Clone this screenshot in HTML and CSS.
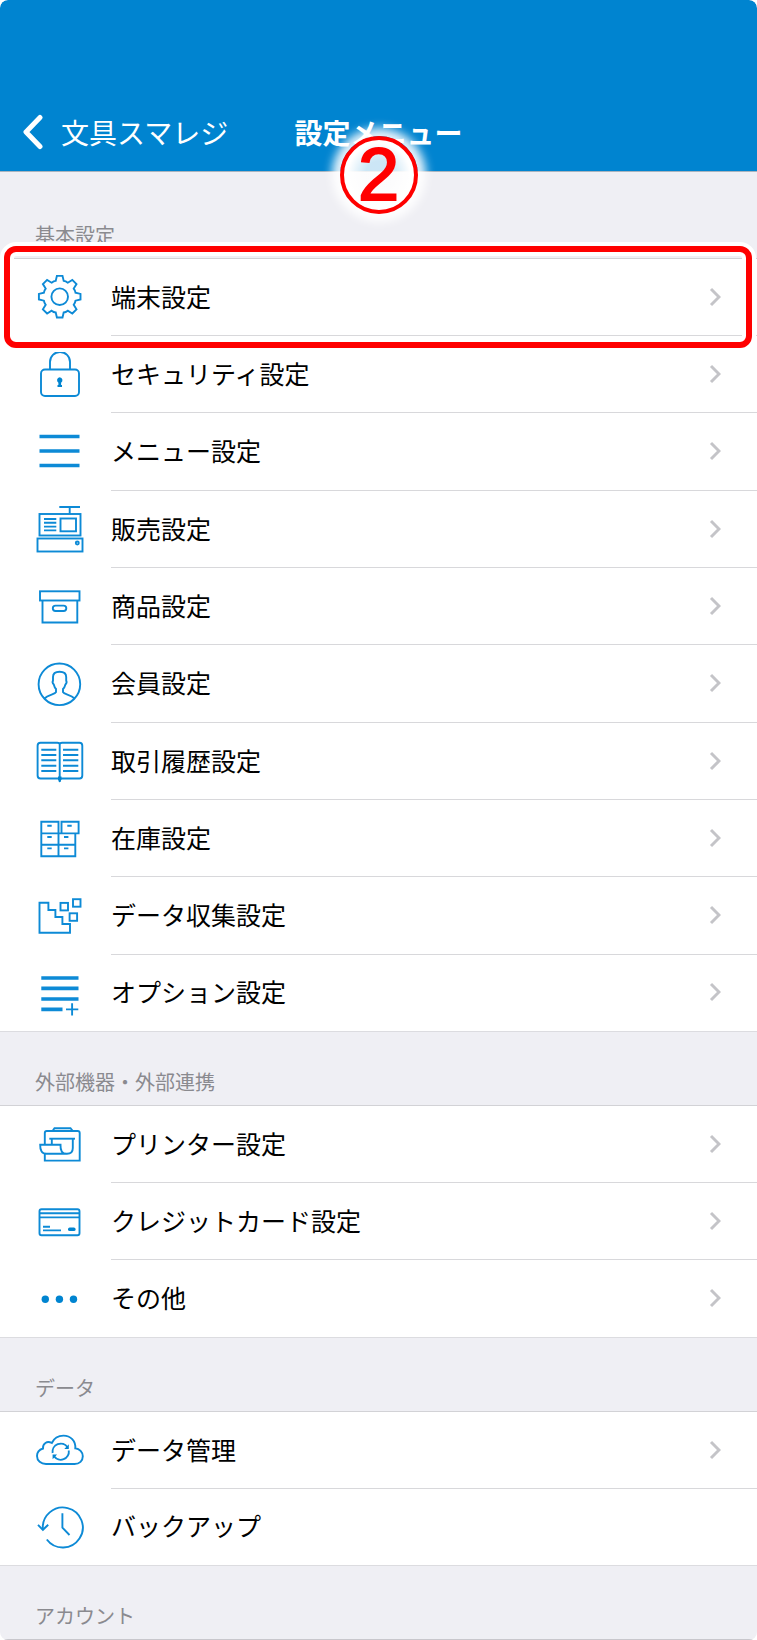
FILE: index.html
```
<!DOCTYPE html>
<html lang="ja">
<head>
<meta charset="utf-8">
<meta name="viewport" content="width=device-width, initial-scale=1">
<title>設定メニュー</title>
<link rel="stylesheet" href="styles.css">
</head>
<body>
<header class="navbar">
  <button class="back" type="button">
    <svg class="back-icon" viewBox="0 0 22 36" aria-hidden="true"><path d="M18 3.500L4 18L18 32.500"/></svg>
    <span>文具スマレジ</span>
  </button>
  <h1 class="title">設定メニュー</h1>
  <span class="step">2</span>
</header>
<main>
  <h2 class="heading heading-first">基本設定</h2>
  <ul class="list">
    <li class="row">
      <a class="link" href="#">
        <svg class="icon" viewBox="0 0 50 50" aria-hidden="true"><g transform="translate(25.700 24.700)"><path d="M-2.800-20.800H2.800L4-15.800Q6-15.600 8.100-14L12.600-16.800L16.800-12.600L14-8.100Q15.600-6 15.800-4L20.800-2.800V2.800L15.800 4Q15.600 6 14 8.100L16.800 12.600L12.600 16.800L8.100 14Q6 15.600 4 15.800L2.800 20.800H-2.800L-4 15.800Q-6 15.600-8.100 14L-12.600 16.800L-16.800 12.600L-14 8.100Q-15.600 6-15.800 4L-20.800 2.800V-2.800L-15.800-4Q-15.600-6-14-8.100L-16.800-12.600L-12.600-16.800L-8.100-14Q-6-15.600-4-15.800Z"/><circle r="8.300"/></g></svg>
        <span class="label">端末設定</span>
        <svg class="chevron" viewBox="0 0 12 20" aria-hidden="true"><path d="M2 2L10 10L2 18"/></svg>
      </a>
      <span class="highlight"></span>
    </li>
    <li class="row">
      <a class="link" href="#">
        <svg class="icon" viewBox="0 0 50 50" aria-hidden="true"><rect x="7" y="20.500" width="38" height="26.500" rx="4"/><path d="M16 20.500V13a10 10 0 0 1 20 0V20.500"/><path class="solid" d="M25.700 28.200a3 3 0 0 1 1.400 5.500V36H28v2H23.500V36h.9V33.700a3 3 0 0 1 1.300-5.500Z"/></svg>
        <span class="label">セキュリティ設定</span>
        <svg class="chevron" viewBox="0 0 12 20" aria-hidden="true"><path d="M2 2L10 10L2 18"/></svg>
      </a>
    </li>
    <li class="row">
      <a class="link" href="#">
        <svg class="icon" viewBox="0 0 50 50" aria-hidden="true"><path class="thick" d="M5.500 10.500H45.500M5.500 25H45.500M5.500 39.500H45.500"/></svg>
        <span class="label">メニュー設定</span>
        <svg class="chevron" viewBox="0 0 12 20" aria-hidden="true"><path d="M2 2L10 10L2 18"/></svg>
      </a>
    </li>
    <li class="row">
      <a class="link" href="#">
        <svg class="icon" viewBox="0 0 50 50" aria-hidden="true"><path d="M25.300 3H46M35.700 3V10"/><rect x="5.500" y="10" width="41" height="21.500"/><path d="M10 15H22.300M10 18.800H22.300M10 22.600H22.300M10 26.400H22.300"/><rect x="26.500" y="14.500" width="15.500" height="12.800"/><rect x="3.500" y="34.500" width="45" height="13"/><circle cx="43.300" cy="39" r="1.500"/></svg>
        <span class="label">販売設定</span>
        <svg class="chevron" viewBox="0 0 12 20" aria-hidden="true"><path d="M2 2L10 10L2 18"/></svg>
      </a>
    </li>
    <li class="row">
      <a class="link" href="#">
        <svg class="icon" viewBox="0 0 50 50" aria-hidden="true"><rect x="6" y="10.300" width="39.500" height="9.200"/><path d="M8.500 19.500V41.500H43.300V19.500"/><rect x="18.800" y="24.600" width="13.500" height="5.400" rx="2.700"/></svg>
        <span class="label">商品設定</span>
        <svg class="chevron" viewBox="0 0 12 20" aria-hidden="true"><path d="M2 2L10 10L2 18"/></svg>
      </a>
    </li>
    <li class="row">
      <a class="link" href="#">
        <svg class="icon" viewBox="0 0 50 50" aria-hidden="true"><circle cx="25.400" cy="26.300" r="20.800"/><path d="M10.500 40.500C14 36.800 21 36.500 22 34.200V31C20.500 29.500 20.300 28.500 19.800 26.500C18.600 25.500 18.500 23.500 19 22.500V19C19 15.500 21.500 13.800 25.600 13.800S32.200 15.500 32.200 19V22.500C32.700 23.500 32.500 25.500 31.400 26.500C30.900 28.500 30.500 29.500 29 31V34.200C30 36.500 37 36.800 40.500 40.500"/></svg>
        <span class="label">会員設定</span>
        <svg class="chevron" viewBox="0 0 12 20" aria-hidden="true"><path d="M2 2L10 10L2 18"/></svg>
      </a>
    </li>
    <li class="row">
      <a class="link" href="#">
        <svg class="icon" viewBox="0 0 50 50" aria-hidden="true"><path d="M25.700 8Q25.500 6.800 23.500 6.800H6.500Q3.600 6.800 3.600 9.700V39.500Q3.600 42.500 6.500 42.500H45.500Q48.300 42.500 48.300 39.500V9.700Q48.300 6.800 45.500 6.800H28Q26 6.800 25.700 8V46"/><path d="M7.300 13.700H22.300M7.300 19H22.300M7.300 24.300H22.300M7.300 29.700H22.300M7.300 35H22.300M29 13.700H44.300M29 19H44.300M29 24.300H44.300M29 29.700H44.300M29 35H44.300"/><path class="solid" d="M24 40.500H27.500V43.500L25.700 46.500L24 43.500Z"/></svg>
        <span class="label">取引履歴設定</span>
        <svg class="chevron" viewBox="0 0 12 20" aria-hidden="true"><path d="M2 2L10 10L2 18"/></svg>
      </a>
    </li>
    <li class="row">
      <a class="link" href="#">
        <svg class="icon" viewBox="0 0 50 50" aria-hidden="true"><path d="M7.300 8.800H24.500V43.300H7.300ZM7.300 20.400H41.300V43.300H24.500M7.300 31.800H41.300M27.500 8.800H44.600V20.400H27.500Z"/><path d="M13.300 12.700H17.700M33.300 12.700H37.700M13.300 24H17.700M30 24H34.400M13.300 35.400H17.700M30 35.400H34.400"/></svg>
        <span class="label">在庫設定</span>
        <svg class="chevron" viewBox="0 0 12 20" aria-hidden="true"><path d="M2 2L10 10L2 18"/></svg>
      </a>
    </li>
    <li class="row">
      <a class="link" href="#">
        <svg class="icon" viewBox="0 0 50 50" aria-hidden="true"><path d="M5.500 12.800H14.400V20H21.400V27H28.400V34H36V42.700H5.500Z"/><rect x="26.500" y="12.900" width="7.500" height="7.500"/><rect x="39" y="9.200" width="7.500" height="7.500"/><rect x="35.600" y="23.300" width="7.500" height="7.500"/></svg>
        <span class="label">データ収集設定</span>
        <svg class="chevron" viewBox="0 0 12 20" aria-hidden="true"><path d="M2 2L10 10L2 18"/></svg>
      </a>
    </li>
    <li class="row">
      <a class="link" href="#">
        <svg class="icon" viewBox="0 0 50 50" aria-hidden="true"><path class="thick" d="M7.300 11H44.500M7.300 21.400H44.500M7.300 32H44.500M7.300 42.400H28.500"/><path d="M32 42.400H44.300M38.100 36.200V48.600"/></svg>
        <span class="label">オプション設定</span>
        <svg class="chevron" viewBox="0 0 12 20" aria-hidden="true"><path d="M2 2L10 10L2 18"/></svg>
      </a>
    </li>
  </ul>

  <h2 class="heading">外部機器・外部連携</h2>
  <ul class="list">
    <li class="row">
      <a class="link" href="#">
        <svg class="icon" viewBox="0 0 50 50" aria-hidden="true"><path d="M10.800 25V14Q10.800 12 12.800 12H43.700Q45.700 12 45.700 14V41.600H10.800V35"/><path d="M18.500 12L20.500 9.200H36.500L38.800 12"/><path d="M15.300 19.700H41"/><path d="M17.800 19.700V25.700M38.800 19.700V29Q38.800 34.800 33 34.800H12.500C8 34.800 6 31.500 6.200 25.800H26.500C26.300 31.500 28 34.800 32.500 34.800"/></svg>
        <span class="label">プリンター設定</span>
        <svg class="chevron" viewBox="0 0 12 20" aria-hidden="true"><path d="M2 2L10 10L2 18"/></svg>
      </a>
    </li>
    <li class="row">
      <a class="link" href="#">
        <svg class="icon" viewBox="0 0 50 50" aria-hidden="true"><rect x="5.500" y="13.200" width="40" height="26" rx="2"/><path d="M5.500 17.300H45.500M5.500 21.400H45.500"/><path d="M9 30.800H16M9 34.400H27"/><rect class="solid" x="34" y="31.600" width="7.600" height="3.500" rx="1.700"/></svg>
        <span class="label">クレジットカード設定</span>
        <svg class="chevron" viewBox="0 0 12 20" aria-hidden="true"><path d="M2 2L10 10L2 18"/></svg>
      </a>
    </li>
    <li class="row">
      <a class="link" href="#">
        <svg class="icon" viewBox="0 0 50 50" aria-hidden="true"><g class="solid"><circle cx="11.300" cy="26.300" r="3.700"/><circle cx="25.400" cy="26.300" r="3.700"/><circle cx="39.500" cy="26.300" r="3.700"/></g></svg>
        <span class="label">その他</span>
        <svg class="chevron" viewBox="0 0 12 20" aria-hidden="true"><path d="M2 2L10 10L2 18"/></svg>
      </a>
    </li>
  </ul>

  <h2 class="heading">データ</h2>
  <ul class="list">
    <li class="row">
      <a class="link" href="#">
        <svg class="icon" viewBox="0 0 50 50" aria-hidden="true"><path d="M12 39H40.500C45.500 39 48.800 35.800 48.800 31.300C48.800 27 45.500 23.700 41.300 23.300C41.800 16 36.500 10.600 29.500 10.600C24 10.600 19.800 13.600 17.800 18C13 15.500 8.500 18.500 9 23.500C5 24.800 3 28 3 31C3 35.800 7 39 12 39Z"/><path d="M18.600 28A8.200 8.200 0 0 1 33.500 22.200M34.800 25.500A8.200 8.200 0 0 1 20 31.300"/><path class="solid" d="M34.800 19.300V24H30.300ZM18.600 34.200V29.500H23.100Z"/></svg>
        <span class="label">データ管理</span>
        <svg class="chevron" viewBox="0 0 12 20" aria-hidden="true"><path d="M2 2L10 10L2 18"/></svg>
      </a>
    </li>
    <li class="row">
      <a class="link" href="#">
        <svg class="icon" viewBox="0 0 50 50" aria-hidden="true"><path d="M8.900 28.500A20 20 0 1 1 12.800 38.500"/><path d="M4 23.800L8.900 28.800L14.200 23.800"/><path d="M28.400 12.300V26.700L35.500 34"/></svg>
        <span class="label">バックアップ</span>
      </a>
    </li>
  </ul>

  <h2 class="heading heading-last">アカウント</h2>
</main>
</body>
</html>
```
FILE: styles.css
```
* {
  box-sizing: border-box;
}

html {
  background: #fff;
}

body {
  margin: 0;
  overflow: hidden;
  border-radius: 8px;
  background: #efeff4;
  color: #000;
  font-family: "Noto Sans CJK JP", sans-serif;
}

.navbar {
  position: relative;
  display: grid;
  grid-template-columns: 1fr auto 1fr;
  align-items: center;
  padding: 112px 22px 19px;
  border-bottom: 1px solid #a9b4be;
  border-radius: 8px 8px 0 0;
  background: #0084d0;
  color: #fff;
}

.back {
  display: flex;
  align-items: center;
  gap: 17px;
  justify-self: start;
  padding: 0;
  border: 0;
  background: none;
  color: inherit;
  font-family: inherit;
  font-size: 28px;
  line-height: 40px;
}

.back-icon {
  width: 22px;
  height: 36px;
  fill: none;
  stroke: currentColor;
  stroke-width: 5;
  stroke-linecap: round;
  stroke-linejoin: round;
}

.title {
  margin: 0;
  font-size: 28px;
  line-height: 40px;
  font-weight: 700;
}

.step {
  position: absolute;
  left: 50%;
  bottom: -43px;
  width: 78px;
  height: 78px;
  margin-left: -39px;
  border: 4px solid #f00;
  border-radius: 50%;
  background: radial-gradient(circle closest-side, rgba(255, 255, 255, 0.8) 40%, #fff 90%);
  box-shadow: 0 0 10px 8px rgba(255, 255, 255, 0.9);
  color: #f00;
  font-family: "Liberation Sans", sans-serif;
  font-size: 74px;
  line-height: 70px;
  text-align: center;
  -webkit-text-stroke: 2px #f00;
}

.heading {
  margin: 0;
  padding: 38px 35px 11px;
  color: #8a8a8f;
  font-size: 20px;
  line-height: 24px;
  font-weight: 400;
}

.heading-first {
  padding-top: 51px;
}

.heading-last {
  border-bottom: 1px solid #c8c7cc;
}

.list {
  margin: 0;
  padding: 0;
  border-top: 1px solid #d2d2d6;
  background: #fff;
  list-style: none;
}

.row {
  position: relative;
  height: 77px;
}

.row:nth-child(3n) {
  height: 78px;
}

.row:last-child {
  border-bottom: 1px solid #dcdce0;
}

.link {
  display: flex;
  align-items: center;
  height: 100%;
  padding: 0 0 2px 34px;
  color: inherit;
  text-decoration: none;
}

.icon {
  flex: none;
  width: 50px;
  height: 50px;
  margin-right: 27px;
  fill: none;
  stroke: #0d8ad6;
  stroke-width: 1.900;
}

.icon .thick {
  stroke-width: 3.600;
}

.icon .solid {
  fill: #0084d0;
  stroke: none;
}

.label {
  flex: 1;
  padding-bottom: 2px;
  font-size: 25px;
  line-height: 36px;
}

.chevron {
  flex: none;
  width: 12px;
  height: 20px;
  margin-right: 36px;
  fill: none;
  stroke: #c4c4c8;
  stroke-width: 3;
}

.row:not(:last-child)::after {
  content: "";
  position: absolute;
  left: 111px;
  right: 0;
  bottom: 0;
  height: 1px;
  background: #d8d8db;
}

.highlight {
  position: absolute;
  z-index: 1;
  top: -13px;
  right: 5px;
  bottom: -12px;
  left: 4px;
  border: 6px solid #f00;
  border-radius: 12px;
  box-shadow: 0 0 0 4px #fff, inset 0 0 0 4px #fff;
  pointer-events: none;
}
```
